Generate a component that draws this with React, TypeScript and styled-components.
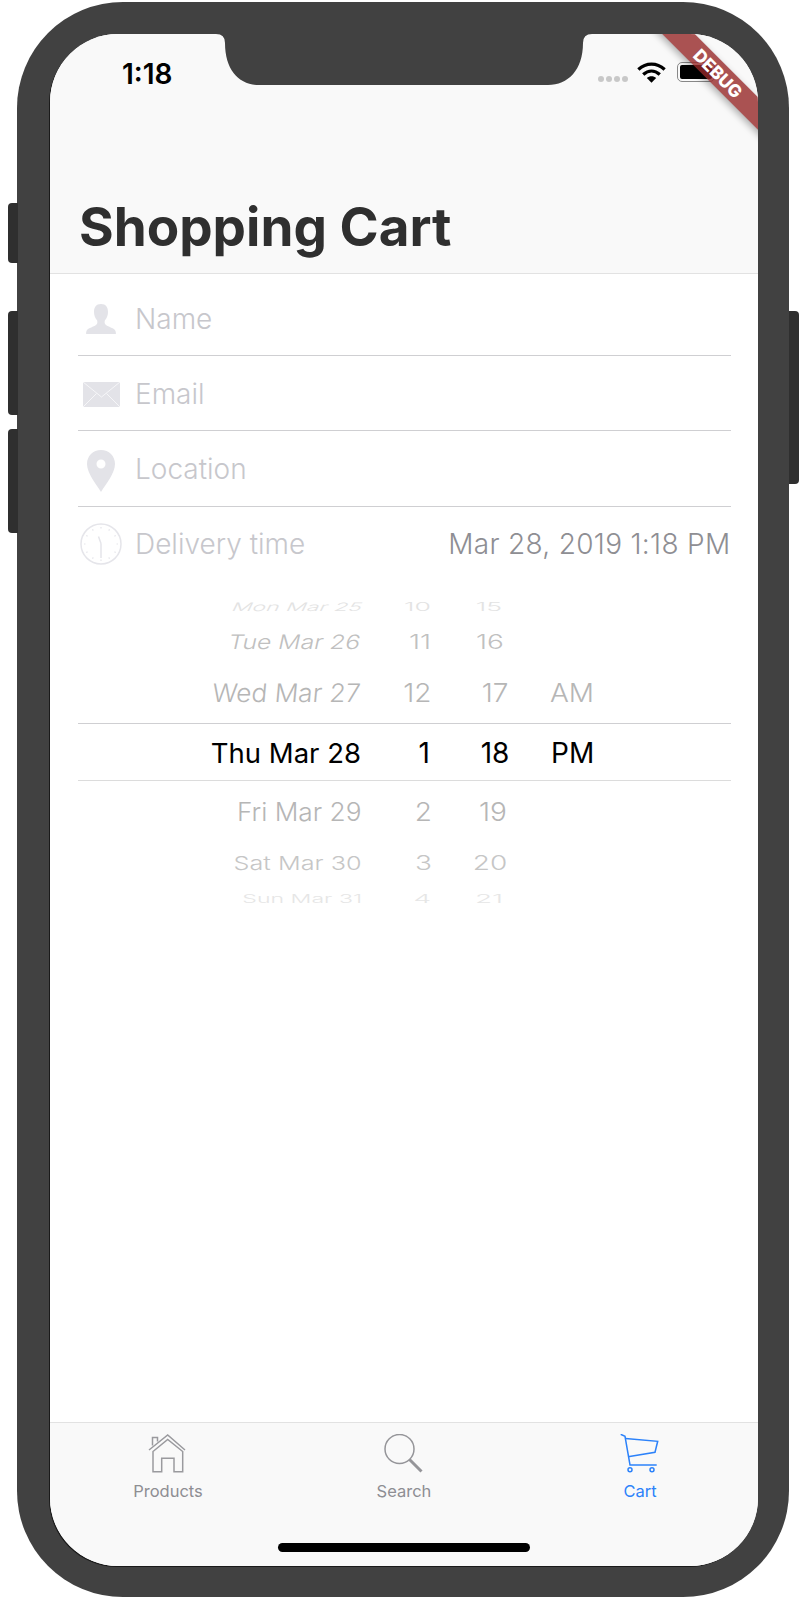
import React from "react";
import styled, { createGlobalStyle } from "styled-components";

const Global = createGlobalStyle`
  html, body { margin: 0; padding: 0; background: #fff; }
  body { font-family: Inter, "Liberation Sans", sans-serif; }
`;

const Page = styled.div`
  width: 807px;
  height: 1600px;
  padding: 2px 0 0 17px;
  box-sizing: border-box;
`;

const Frame = styled.div`
  position: relative;
  width: 772px;
  height: 1595px;
  box-sizing: border-box;
  padding: 32px 31px 31px 33px;
  background: #414141;
  border-radius: 106px;
`;

const SideButton = styled.div<{ $top: number; $height: number; $right?: boolean }>`
  position: absolute;
  top: ${(p) => p.$top}px;
  height: ${(p) => p.$height}px;
  width: 10px;
  background: #2f2f2f;
  ${(p) =>
    p.$right
      ? "right: -10px; border-radius: 0 4px 4px 0;"
      : "left: -9.5px; border-radius: 4px 0 0 4px;"}
`;

const Screen = styled.div`
  position: relative;
  display: flex;
  flex-direction: column;
  height: 100%;
  background: #fff;
  border-radius: 68px;
  overflow: hidden;
  box-shadow: -1px 1px 0 #1a1a1a;
`;

const Notch = styled.svg`
  position: absolute;
  left: 0;
  top: 0;
  width: 708px;
  height: 60px;
  z-index: 2;
`;

const Banner = styled.div`
  position: absolute;
  left: 558px;
  top: 28px;
  width: 220px;
  height: 23px;
  line-height: 23px;
  text-align: center;
  transform: rotate(45deg);
  background: rgba(150, 40, 40, 0.8);
  box-shadow: 0 3px 7px rgba(0, 0, 0, 0.3);
  color: #fff;
  font-size: 17.5px;
  font-weight: 800;
  z-index: 3;
`;

const Header = styled.header`
  height: 240px;
  box-sizing: border-box;
  flex: none;
  background: #f9f9f9;
  border-bottom: 1px solid #e2e2e2;
  display: flex;
  flex-direction: column;
`;

const StatusBar = styled.div`
  display: flex;
  align-items: center;
  justify-content: space-between;
  height: 32px;
  margin-top: 22px;
  padding: 0 43px 0 72px;
`;

const Clock = styled.span`
  padding-top: 4px;
  font-size: 28px;
  font-weight: 600;
  color: #000;
`;

const StatusRight = styled.div`
  display: flex;
  align-items: center;
`;

const Dots = styled.div`
  display: flex;
  gap: 2px;
  margin: 14px 9px 0 0;
`;

const Dot = styled.i`
  display: block;
  width: 6px;
  height: 6px;
  border-radius: 50%;
  background: #c8c8c8;
`;

const Battery = styled.div`
  width: 38px;
  height: 20px;
  box-sizing: border-box;
  margin-left: 11px;
  padding: 2px;
  border: 1px solid #888;
  border-radius: 5px;
`;

const BatteryFill = styled.div`
  height: 100%;
  background: #000;
  border-radius: 2px;
`;

const Title = styled.h1`
  margin: auto 0 16px 29px;
  font-size: 53px;
  line-height: 60px;
  font-weight: 700;
  color: #2f2f2f;
`;

const Form = styled.div`
  padding: 7px 27.5px 0;
  flex: none;
`;

const Row = styled.div<{ $h?: number; $pt?: number; $last?: boolean }>`
  display: flex;
  align-items: center;
  height: ${(p) => p.$h ?? 75}px;
  box-sizing: border-box;
  padding-top: ${(p) => p.$pt ?? 0}px;
  border-bottom: ${(p) => (p.$last ? "none" : "1px solid #cfcfd2")};
`;

const IconSlot = styled.div<{ $dy?: number }>`
  display: flex;
  justify-content: center;
  width: 47px;
  margin-right: 10.5px;
  transform: translateY(${(p) => p.$dy ?? 0}px);
`;

const Placeholder = styled.span`
  font-size: 28px;
  font-weight: 300;
  color: #c7c7cc;
`;

const Value = styled.span`
  margin-left: auto;
  font-size: 28px;
  font-weight: 300;
  letter-spacing: 0.32px;
  color: #8e8e93;
`;

const Picker = styled.div`
  flex: none;
  padding: 9px 27.5px 0;
`;

const WheelRow = styled.div<{ $h: number; $selected?: boolean }>`
  display: grid;
  grid-template-columns: 282.5px 70px 120px 1fr;
  align-items: center;
  height: ${(p) => p.$h}px;
  box-sizing: border-box;
  overflow: hidden;
  ${(p) =>
    p.$selected
      ? "border-top: 1px solid #cfcfd2; border-bottom: 1px solid #dcdcdc;"
      : ""}
`;

const Cell = styled.span<{
  $c: string;
  $sx: number;
  $sy: number;
  $skew?: number;
  $dx?: number;
  $dy?: number;
  $fs?: number;
  $align: "right" | "center" | "left";
}>`
  display: block;
  font-size: ${(p) => p.$fs ?? 28}px;
  line-height: 34px;
  font-weight: ${(p) => (p.$c === "#000" ? 400 : 350)};
  color: ${(p) => p.$c};
  white-space: nowrap;
  text-align: ${(p) => p.$align};
  transform-origin: ${(p) => p.$align} center;
  transform: translate(${(p) => p.$dx ?? 0}px, ${(p) => p.$dy ?? 0}px)
    scale(${(p) => p.$sx}, ${(p) => p.$sy}) skewX(${(p) => p.$skew ?? 0}deg);
`;

const Spacer = styled.div`
  flex: 1;
`;

const TabBar = styled.footer`
  flex: none;
  height: 144px;
  box-sizing: border-box;
  background: #f9f9f9;
  border-top: 1px solid #e2e2e2;
  display: flex;
  flex-direction: column;
  align-items: center;
`;

const Tabs = styled.nav`
  width: 100%;
  display: grid;
  grid-template-columns: repeat(3, 1fr);
  padding-top: 11px;
`;

const Tab = styled.div<{ $active?: boolean }>`
  display: flex;
  flex-direction: column;
  align-items: center;
  color: ${(p) => (p.$active ? "#2c82fa" : "#8e8e93")};
`;

const TabLabel = styled.span`
  margin-top: 7px;
  font-size: 16.5px;
  line-height: 20px;
  font-weight: 400;
`;

const HomeBar = styled.div`
  width: 252px;
  height: 9px;
  margin-top: 42px;
  border-radius: 5px;
  background: #000;
`;

type Wheel = {
  h: number;
  d: string;
  hr: string;
  m: string;
  ap?: string;
  c: string;
  sx: number;
  sy: number;
  sk: number;
  ds: number;
  dy?: number;
  hx?: number;
  mx?: number;
  apx?: number;
  dx?: number;
};

const wheel: Wheel[] = [
  { h: 32, d: "Mon Mar 25", hr: "10", m: "15", c: "#e3e3e3", sx: 0.95, sy: 0.42, sk: -14, ds: 0.835, hx: 1, mx: -1, dx: 2 },
  { h: 39, d: "Tue Mar 26", hr: "11", m: "16", c: "#c0c0c0", sx: 1, sy: 0.72, sk: -10, ds: 0.9, hx: 1, dy: -0.5 },
  { h: 62, d: "Wed Mar 27", hr: "12", m: "17", ap: "AM", c: "#b6b6b6", sx: 1, sy: 0.93, sk: -5, ds: 0.955, dy: 1, hx: 1.5, mx: 5 },
  { h: 58, d: "Thu Mar 28", hr: "1", m: "18", ap: "PM", c: "#000", sx: 1, sy: 1, sk: 0, ds: 1, mx: 5, apx: 1, dx: 1, dy: 0.5 },
  { h: 62, d: "Fri Mar 29", hr: "2", m: "19", c: "#b6b6b6", sx: 1, sy: 0.93, sk: 0, ds: 0.955, hx: 2, mx: 3, dx: 1 },
  { h: 40, d: "Sat Mar 30", hr: "3", m: "20", c: "#c6c6c6", sx: 1, sy: 0.7, sk: 0, ds: 0.917, hx: 2, dx: 1 },
  { h: 30, d: "Sun Mar 31", hr: "4", m: "21", c: "#e6e6e6", sx: 1, sy: 0.42, sk: 0, ds: 0.84, dy: -1, hx: 1, mx: -1, dx: 1.5 },
];

const FieldIconColor = "#e3e3e8";

function Person() {
  return (
    <svg width="32" height="32" viewBox="0 0 32 32" fill={FieldIconColor}>
      <path d="M16 1c-5 0-7 3.500-7 8 0 3.500 1.300 6.500 3.200 8.500.6 2.500-.2 4.200-2.200 5.300C7 24.300 2.500 25.500 1.500 28c-.4 1-.4 2-.4 3h29.800c0-1 0-2-.4-3-1-2.500-5.500-3.700-8.500-5.200-2-1.100-2.800-2.800-2.200-5.300C21.700 15.500 23 12.500 23 9c0-4.500-2-8-7-8z" />
    </svg>
  );
}

function Mail() {
  return (
    <svg width="37" height="25" viewBox="0 0 37 25">
      <rect width="37" height="25" fill={FieldIconColor} />
      <path d="M0 0l18.500 15L37 0M0 25l13.500-13.500M37 25L23.500 11.500" fill="none" stroke="#f6f6f8" strokeWidth="1" />
    </svg>
  );
}

function Pin() {
  return (
    <svg width="28" height="42" viewBox="0 0 28 42">
      <path
        fillRule="evenodd"
        fill={FieldIconColor}
        d="M14 0C6 0 0 6 0 14c0 9 9 20 14 28 5-8 14-19 14-28C28 6 22 0 14 0zm0 9.500a4.500 4.500 0 1 1 0 9 4.500 4.500 0 0 1 0-9z"
      />
    </svg>
  );
}

function Dial() {
  const ticks = Array.from({ length: 12 }, (_, i) => i * 30);
  return (
    <svg width="42" height="42" viewBox="0 0 42 42" fill="none" stroke="#e5e5ea">
      <circle cx="21" cy="21" r="20" strokeWidth="1.500" />
      {ticks.map((a) => (
        <line key={a} x1="21" y1="4" x2="21" y2="5.500" strokeWidth="1.200" transform={`rotate(${a} 21 21)`} />
      ))}
      <path d="M21 20.500L18.500 13.500M21 20.500V35" strokeWidth="1.500" />
    </svg>
  );
}

function HomeIcon() {
  return (
    <svg width="40" height="40" viewBox="0 0 40 40" fill="none" stroke="#9a9a9e" strokeWidth="1.500">
      <path d="M1 16L19.700 1 37 16" />
      <path d="M5 17.500L19.700 5.500 34.700 17.500V37.700H26V24.300H13.700V37.700H5z" />
      <path d="M4.500 11.500V3.500H9.500V7.500" />
    </svg>
  );
}

function SearchIcon() {
  return (
    <svg width="40" height="40" viewBox="0 0 40 40" fill="none" stroke="#959599">
      <circle cx="15.500" cy="15" r="14.500" strokeWidth="1.500" />
      <path d="M25.500 25.500L37.500 37.500" strokeWidth="3" />
    </svg>
  );
}

function CartIcon() {
  return (
    <svg width="40" height="40" viewBox="0 0 40 40" fill="none" stroke="#2c82fa" strokeWidth="1.500">
      <path d="M.7.300L5 2.300 10 31H36.700" />
      <path d="M5.500 4.500L37.700 7.300 35 18.300 8 22.700" />
      <circle cx="10" cy="35.700" r="2" />
      <circle cx="32" cy="35.700" r="2" />
    </svg>
  );
}

export default function App() {
  return (
    <Page>
      <Global />
      <Frame>
        <SideButton $top={201} $height={60} />
        <SideButton $top={309} $height={104} />
        <SideButton $top={427} $height={104} />
        <SideButton $right $top={309} $height={173} />
        <Screen>
          <Notch viewBox="0 0 708 60">
            <path
              d="M166 0Q175 0 175 9C175 36 189 51 209 51H498C518 51 533 36 533 9Q533 0 542 0Z"
              fill="#414141"
            />
          </Notch>
          <Banner>DEBUG</Banner>
          <Header>
            <StatusBar>
              <Clock>1:18</Clock>
              <StatusRight>
                <Dots>
                  <Dot />
                  <Dot />
                  <Dot />
                  <Dot />
                </Dots>
                <svg width="29" height="21" viewBox="0 0 28 20" fill="none" stroke="#000" strokeWidth="3.200">
                  <path d="M1.300 7C9 .3 19 .3 26.700 7" />
                  <path d="M6 12C11 7.500 17 7.500 22 12" />
                  <path d="M14 20l-4.500-4.700c2.500-2.200 6.500-2.200 9 0z" fill="#000" stroke="none" />
                </svg>
                <Battery>
                  <BatteryFill />
                </Battery>
              </StatusRight>
            </StatusBar>
            <Title>Shopping Cart</Title>
          </Header>
          <Form>
            <Row $pt={2}>
              <IconSlot>
                <Person />
              </IconSlot>
              <Placeholder>Name</Placeholder>
            </Row>
            <Row $pt={2}>
              <IconSlot>
                <Mail />
              </IconSlot>
              <Placeholder>Email</Placeholder>
            </Row>
            <Row $h={76}>
              <IconSlot $dy={2}>
                <Pin />
              </IconSlot>
              <Placeholder>Location</Placeholder>
            </Row>
            <Row $h={74} $last>
              <IconSlot>
                <Dial />
              </IconSlot>
              <Placeholder>Delivery time</Placeholder>
              <Value>Mar 28, 2019 1:18 PM</Value>
            </Row>
          </Form>
          <Picker>
            {wheel.map((r) => (
              <WheelRow key={r.d} $h={r.h} $selected={r.d.startsWith("Thu")}>
                <Cell $align="right" $c={r.c} $fs={27.5} $sx={r.ds} $sy={r.sy} $skew={r.sk} $dx={r.dx} $dy={r.dy}>
                  {r.d}
                </Cell>
                <Cell $align="right" $c={r.c} $sx={r.sx} $sy={r.sy} $dx={r.hx} $dy={r.dy}>
                  {r.hr}
                </Cell>
                <Cell $align="center" $c={r.c} $sx={r.sx} $sy={r.sy} $dx={r.mx} $dy={r.dy}>
                  {r.m}
                </Cell>
                <Cell $align="left" $c={r.c} $sx={r.sx} $sy={r.sy} $dx={r.apx} $dy={r.dy}>
                  {r.ap ?? ""}
                </Cell>
              </WheelRow>
            ))}
          </Picker>
          <Spacer />
          <TabBar>
            <Tabs>
              <Tab>
                <HomeIcon />
                <TabLabel>Products</TabLabel>
              </Tab>
              <Tab>
                <SearchIcon />
                <TabLabel>Search</TabLabel>
              </Tab>
              <Tab $active>
                <CartIcon />
                <TabLabel>Cart</TabLabel>
              </Tab>
            </Tabs>
            <HomeBar />
          </TabBar>
        </Screen>
      </Frame>
    </Page>
  );
}
